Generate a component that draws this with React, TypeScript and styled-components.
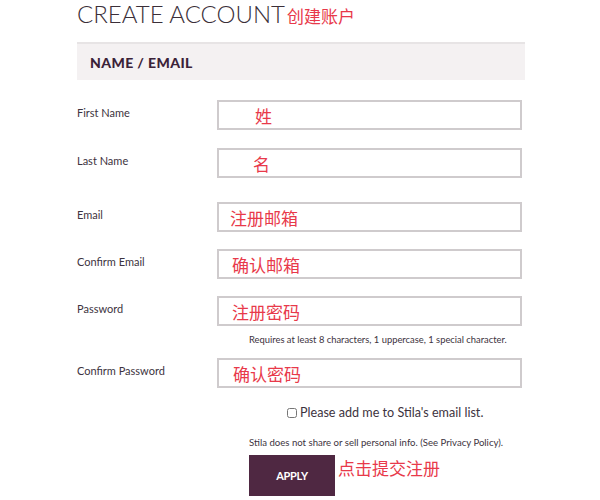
import React from "react";
import styled, { createGlobalStyle } from "styled-components";

const GlobalStyle = createGlobalStyle`
  body {
    margin: 0;
    background: #ffffff;
    font-family: Lato, "Noto Sans CJK SC", sans-serif;
  }
`;

const Page = styled.div`
  width: 448px;
  padding-left: 77px;
`;

const Title = styled.h1`
  margin: 0;
  height: 28px;
  line-height: 28px;
  font-size: 24px;
  font-weight: 300;
  letter-spacing: 0;
  color: #3b2f39;
  white-space: nowrap;
`;

const Note = styled.span<{ $gap?: number }>`
  margin-left: ${(p) => p.$gap ?? 0}px;
  font-family: "Noto Sans CJK SC", sans-serif;
  font-size: 17px;
  font-weight: 400;
  letter-spacing: 0;
  color: #e8394a;
`;

const SectionHeader = styled.div`
  margin-top: 14px;
  height: 36px;
  border-top: 2px solid #e7e4e5;
  background: #f4f1f2;
  padding-left: 13px;
  display: flex;
  align-items: center;
  font-size: 14px;
  font-weight: 900;
  letter-spacing: 0.4px;
  color: #3b2238;
`;

const Row = styled.div<{ $gap: number }>`
  margin-top: ${(p) => p.$gap}px;
  display: grid;
  grid-template-columns: 140px 305px;
`;

const Label = styled.label`
  padding-top: 6px;
  line-height: 14px;
  font-size: 11px;
  color: #3d3340;
`;

const Field = styled.div<{ $indent: number }>`
  box-sizing: border-box;
  height: 30px;
  border: 2px solid #cfcbcd;
  padding-left: ${(p) => p.$indent}px;
  display: flex;
  align-items: center;
  font-family: "Noto Sans CJK SC", sans-serif;
  font-size: 17px;
  color: #e8394a;
`;

const Hint = styled.div`
  grid-column: 2;
  padding: 8px 0 0 32px;
  line-height: 12px;
  font-size: 9.4px;
  color: #3d3340;
  white-space: nowrap;
`;

const Footer = styled.div`
  margin-left: 172px;
  padding-top: 17px;
`;

const CheckRow = styled.label`
  margin-left: 38px;
  display: flex;
  align-items: center;
  gap: 3px;
  line-height: 16px;
  font-size: 12.6px;
  color: #3d3340;
`;

const Box = styled.input`
  margin: 0;
  width: 10px;
  height: 10px;
`;

const Privacy = styled.div`
  margin-top: 15px;
  line-height: 13px;
  font-size: 9.6px;
  color: #3d3340;
  white-space: nowrap;
`;

const Actions = styled.div`
  margin-top: 6px;
  display: flex;
  align-items: flex-start;
  gap: 3px;
`;

const Apply = styled.button`
  width: 86px;
  height: 41px;
  border: none;
  background: #4f2842;
  color: #ffffff;
  font-family: Lato, sans-serif;
  font-size: 11px;
  font-weight: 700;
  letter-spacing: -0.3px;
  cursor: pointer;
`;

const fields = [
  { label: "First Name", text: "姓", indent: 36, gap: 20 },
  { label: "Last Name", text: "名", indent: 34, gap: 18 },
  { label: "Email", text: "注册邮箱", indent: 11, gap: 24 },
  { label: "Confirm Email", text: "确认邮箱", indent: 13, gap: 17 },
  { label: "Password", text: "注册密码", indent: 13, gap: 17, hint: true },
  { label: "Confirm Password", text: "确认密码", indent: 14, gap: 12 },
];

export default function App() {
  return (
    <Page>
      <GlobalStyle />
      <Title>
        CREATE ACCOUNT<Note $gap={2}>创建账户</Note>
      </Title>
      <SectionHeader>NAME / EMAIL</SectionHeader>
      {fields.map((f) => (
        <Row key={f.label} $gap={f.gap}>
          <Label>{f.label}</Label>
          <Field $indent={f.indent}>{f.text}</Field>
          {f.hint && (
            <Hint>Requires at least 8 characters, 1 uppercase, 1 special character.</Hint>
          )}
        </Row>
      ))}
      <Footer>
        <CheckRow>
          <Box type="checkbox" />
          Please add me to Stila's email list.
        </CheckRow>
        <Privacy>Stila does not share or sell personal info. (See Privacy Policy).</Privacy>
        <Actions>
          <Apply>APPLY</Apply>
          <Note>点击提交注册</Note>
        </Actions>
      </Footer>
    </Page>
  );
}
